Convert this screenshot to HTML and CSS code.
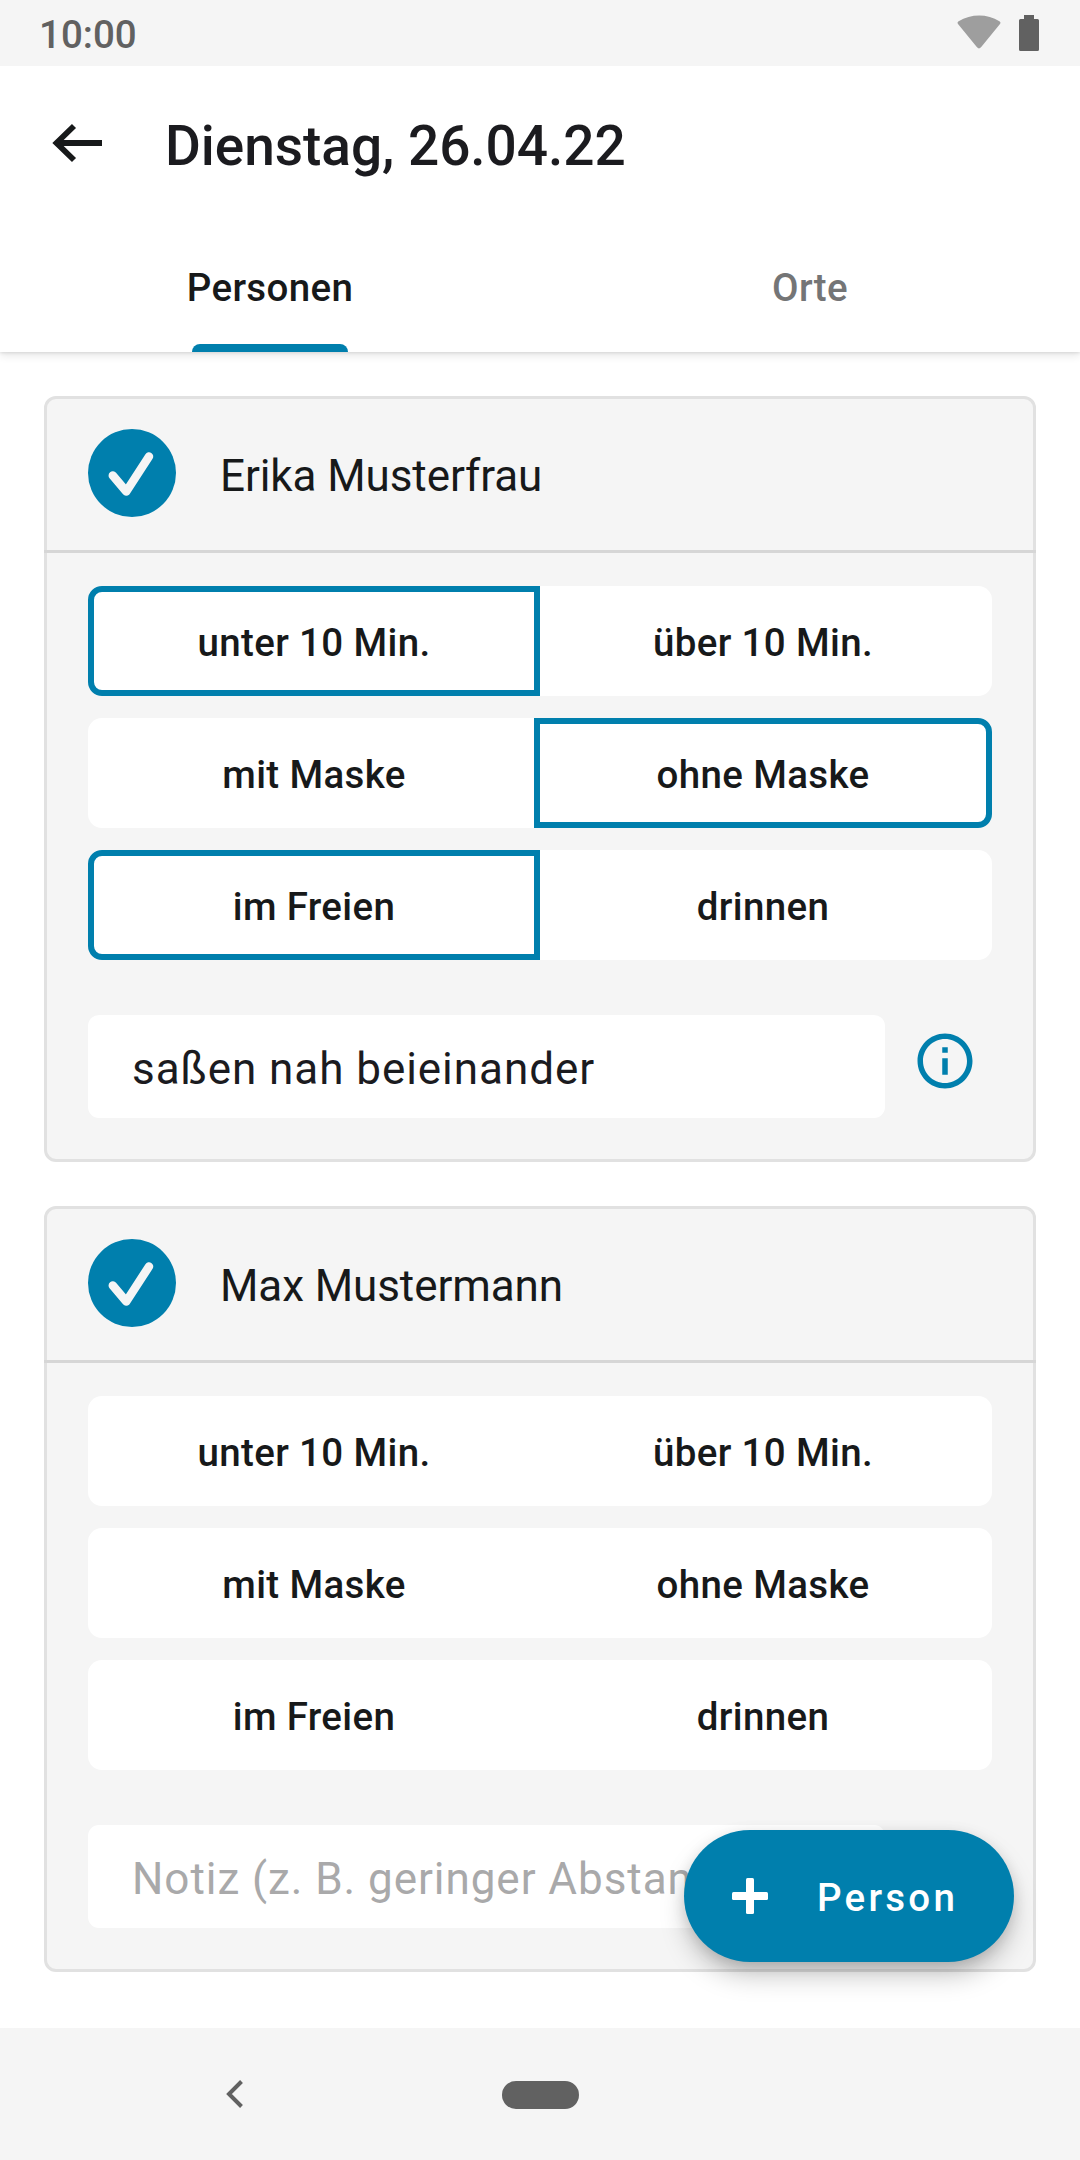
FILE: index.html
```
<!DOCTYPE html>
<html lang="de">
<head>
<meta charset="utf-8">
<title>Dienstag, 26.04.22</title>
<link rel="stylesheet" href="styles.css">
</head>
<body>
<div class="screen">
  <div class="status-bar">
    <span class="clock">10:00</span>
    <svg class="wifi" viewBox="0 0 44 36"><path d="M1.2 9.2Q-.3 7.5 1.6 6.2C14-1.3 30.500-1.300 42.400 6.200Q44.300 7.500 42.800 9.200L24 32.300Q22 34.600 20 32.300Z"/></svg>
    <svg class="battery" viewBox="0 0 20 36"><path d="M5 0h10v4h3.500q1.500 0 1.500 1.500v29q0 1.500-1.500 1.500h-17q-1.500 0-1.500-1.500v-29q0-1.500 1.500-1.500h3.500z"/></svg>
  </div>

  <header class="top">
    <div class="app-bar">
      <svg class="back" viewBox="0 0 50 40"><path d="M50 20H4M22 3L4.500 20 22 37"/></svg>
      <h1 class="title">Dienstag, 26.04.22</h1>
    </div>
    <nav class="tabs">
      <div class="tab tab-active">Personen</div>
      <div class="tab">Orte</div>
    </nav>
  </header>

  <main class="list">
    <section class="card">
      <div class="card-head">
        <svg class="check" viewBox="0 0 88 88"><circle cx="44" cy="44" r="44"/><path d="M24.800 46.500L38.300 62.500 61 27.500"/></svg>
        <h2 class="name">Erika Musterfrau</h2>
      </div>
      <div class="card-body">
        <div class="toggle"><div class="option selected">unter 10 Min.</div><div class="option">über 10 Min.</div></div>
        <div class="toggle"><div class="option">mit Maske</div><div class="option selected">ohne Maske</div></div>
        <div class="toggle"><div class="option selected">im Freien</div><div class="option">drinnen</div></div>
        <div class="note-row">
          <input class="note" type="text" value="saßen nah beieinander">
          <svg class="info" viewBox="0 0 24 24"><path d="M11 7h2v2h-2zm0 4h2v6h-2zm1-9C6.480 2 2 6.480 2 12s4.480 10 10 10 10-4.480 10-10S17.520 2 12 2zm0 18c-4.410 0-8-3.590-8-8s3.590-8 8-8 8 3.590 8 8-3.590 8-8 8z"/></svg>
        </div>
      </div>
    </section>

    <section class="card">
      <div class="card-head">
        <svg class="check" viewBox="0 0 88 88"><circle cx="44" cy="44" r="44"/><path d="M24.800 46.500L38.300 62.500 61 27.500"/></svg>
        <h2 class="name">Max Mustermann</h2>
      </div>
      <div class="card-body">
        <div class="toggle"><div class="option">unter 10 Min.</div><div class="option">über 10 Min.</div></div>
        <div class="toggle"><div class="option">mit Maske</div><div class="option">ohne Maske</div></div>
        <div class="toggle"><div class="option">im Freien</div><div class="option">drinnen</div></div>
        <div class="note-row">
          <input class="note" type="text" placeholder="Notiz (z. B. geringer Abstand)">
        </div>
      </div>
    </section>
  </main>

  <div class="fab">
    <svg class="plus" viewBox="0 0 36 36"><rect x="0" y="14" width="36" height="8" rx="1.500"/><rect x="14" y="0" width="8" height="36" rx="1.500"/></svg>
    <span class="fab-label">Person</span>
  </div>

  <footer class="nav-bar">
    <svg class="nav-back" viewBox="0 0 18 28"><path d="M15.500 1.500L3 14 15.500 26.500"/></svg>
    <div class="nav-home"></div>
  </footer>
</div>
</body>
</html>
```
FILE: styles.css
```
* {
  box-sizing: border-box;
}

body {
  margin: 0;
  font-family: Roboto, "Liberation Sans", sans-serif;
  color: #17191a;
  background: #fff;
}

.screen {
  position: relative;
  display: flex;
  flex-direction: column;
  width: 1080px;
  height: 2160px;
  overflow: hidden;
}

.status-bar {
  position: relative;
  z-index: 1;
  display: flex;
  height: 66px;
  padding: 0 41px 0 39px;
  background: #f5f5f5;
  color: #616161;
}

.clock {
  flex: 1;
  padding-top: 1px;
  font-size: 38.5px;
  font-weight: 500;
  line-height: 68px;
}

.wifi {
  width: 44px;
  height: 36px;
  margin: 15px 18px 0 0;
  fill: #9e9e9e;
}

.battery {
  width: 20px;
  height: 36px;
  margin-top: 15px;
  fill: #616161;
}

.top {
  height: 286px;
  background: #fff;
  box-shadow: 0 4px 8px rgba(0, 0, 0, .09), 0 1px 3px rgba(0, 0, 0, .1);
  clip-path: inset(0 0 -20px);
}

.app-bar {
  display: flex;
  align-items: center;
  height: 154px;
  padding-left: 52px;
}

.back {
  width: 50px;
  height: 40px;
  margin-right: 63px;
  fill: none;
  stroke: #17191a;
  stroke-width: 5.800;
}

.title {
  margin: 0;
  padding-top: 6px;
  font-size: 55px;
  font-weight: 500;
  letter-spacing: -.05px;
  line-height: 64px;
  color: #1b1b1f;
}

.tabs {
  display: flex;
  height: 132px;
}

.tab {
  display: flex;
  flex: 1;
  flex-direction: column;
  align-items: center;
  padding-top: 42px;
  font-size: 38.5px;
  font-weight: 500;
  letter-spacing: .35px;
  line-height: 52px;
  color: #747576;
}

.tab-active {
  color: #17191a;
}

.tab-active::after {
  content: "";
  width: 156px;
  height: 8px;
  margin-top: auto;
  border-radius: 8px 8px 0 0;
  background: #007fad;
}

.list {
  display: flex;
  flex: 1;
  flex-direction: column;
  gap: 44px;
  padding: 44px;
}

.card {
  height: 766px;
  border: 3px solid #e1e1e1;
  border-radius: 12px;
  background: #f5f5f5;
}

.card-head {
  display: flex;
  gap: 44px;
  height: 154px;
  margin: 0 -3px;
  padding: 30px 44px 0;
  border-bottom: 3px solid #d6d6d6;
}

.check {
  width: 88px;
  height: 88px;
  fill: #007fad;
}

.check path {
  fill: none;
  stroke: #f5f5f5;
  stroke-width: 8.500;
  stroke-linecap: round;
  stroke-linejoin: round;
}

.name {
  margin: 3px 0 0;
  font-size: 44px;
  font-weight: 400;
  letter-spacing: -.09px;
  line-height: 88px;
}

.card-body {
  display: flex;
  flex-direction: column;
  gap: 22px;
  padding: 33px 41px 0;
}

.toggle {
  display: flex;
  height: 110px;
  border-radius: 14px;
  background: #fff;
}

.option {
  width: 452px;
  padding-top: 2px;
  border: 6px solid transparent;
  border-radius: 14px 0 0 14px;
  font-size: 38.5px;
  font-weight: 500;
  letter-spacing: .35px;
  line-height: 98px;
  text-align: center;
}

.option + .option {
  width: 458px;
  margin-left: -6px;
  border-radius: 0 14px 14px 0;
}

.option.selected {
  border-color: #007fad;
}

.note-row {
  display: flex;
  gap: 27px;
  margin-top: 33px;
}

.note {
  width: 797px;
  height: 103px;
  padding: 5px 44px 0;
  border: 0;
  border-radius: 11px;
  outline: 0;
  background: #fff;
  color: #1b1b1f;
  font: 400 44px Roboto, "Liberation Sans", sans-serif;
  letter-spacing: .95px;
}

.note::placeholder {
  color: #a9a9aa;
  opacity: 1;
}

.info {
  width: 66px;
  height: 66px;
  margin-top: 13px;
  fill: #007fad;
}

.fab {
  position: absolute;
  top: 1830px;
  left: 684px;
  display: flex;
  align-items: center;
  width: 330px;
  height: 132px;
  padding-left: 48px;
  border-radius: 66px;
  background: #007fad;
  color: #fff;
  box-shadow: 0 15px 28px -4px rgba(0, 0, 0, .27), 0 3px 14px rgba(0, 0, 0, .1);
}

.plus {
  width: 36px;
  height: 36px;
  margin-right: 49px;
  fill: #fff;
}

.fab-label {
  padding-top: 2px;
  font-size: 38.5px;
  font-weight: 500;
  letter-spacing: 3.250px;
}

.nav-bar {
  display: flex;
  align-items: center;
  height: 132px;
  padding-left: 226px;
  background: #f5f5f5;
}

.nav-back {
  width: 18px;
  height: 28px;
  fill: none;
  stroke: #616161;
  stroke-width: 4;
}

.nav-home {
  width: 77px;
  height: 28px;
  margin: 1px 0 0 258px;
  border-radius: 14px;
  background: #616161;
}
```
